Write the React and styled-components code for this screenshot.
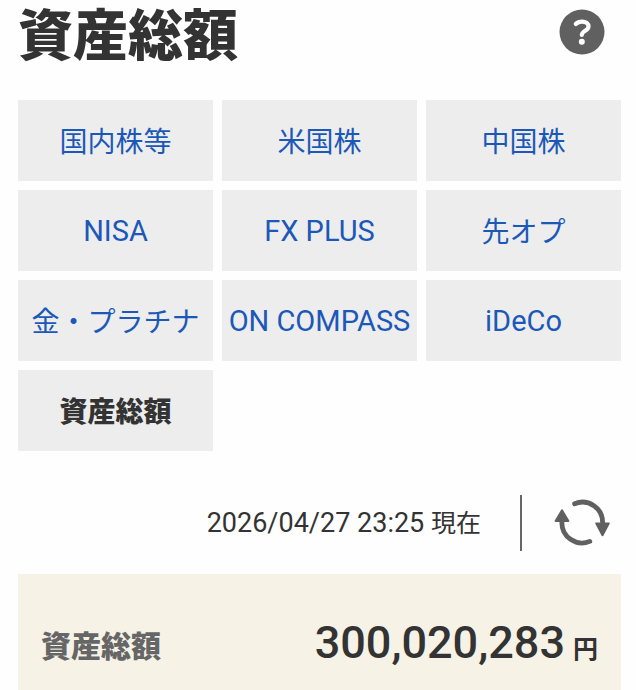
import React from 'react'
import styled, { createGlobalStyle } from 'styled-components'

const GlobalStyle = createGlobalStyle`
  * {
    box-sizing: border-box;
  }

  body {
    background: #fefefe;
    color: #333;
    font-family: Roboto, 'Noto Sans CJK JP', sans-serif;
    margin: 0;
  }
`

const Page = styled.main`
  padding: 0 15px 0 18px;
`

const Header = styled.header`
  align-items: flex-start;
  display: flex;
  justify-content: space-between;
  margin-bottom: 28px;
  padding-right: 16px;
`

const Title = styled.h1`
  font-size: 55px;
  font-weight: 900;
  line-height: 72px;
  margin: 0;
`

const IconButton = styled.button`
  background: none;
  border: 0;
  cursor: pointer;
  display: flex;
  padding: 0;
`

const HelpButton = styled(IconButton)`
  padding-top: 9px;
`

const AccountGrid = styled.nav`
  display: grid;
  grid-auto-rows: 81px;
  grid-gap: 9px;
  grid-template-columns: repeat(3, 1fr);
`

const AccountLink = styled.a`
  align-items: center;
  background: #ededed;
  color: ${({ $active }) => ($active ? '#333' : '#1b58b8')};
  display: flex;
  font-size: ${({ $latin }) => ($latin ? 29 : 28)}px;
  font-weight: ${({ $active }) => ($active ? 900 : 400)};
  justify-content: center;
  line-height: 40px;
  padding-top: ${({ $latin }) => ($latin ? 1 : 4)}px;
  text-decoration: none;
  white-space: nowrap;
`

const UpdateBar = styled.div`
  align-items: center;
  display: flex;
  height: 56px;
  justify-content: flex-end;
  margin: 44px 0 23px;
  padding-right: 11px;
`

const UpdatedAt = styled.time`
  font-size: 27px;
  line-height: 40px;
`

const Suffix = styled.span`
  font-size: 25px;
`

const Divider = styled.span`
  align-self: stretch;
  background: #666;
  margin: 0 32px 0 39px;
  width: 2px;
`

const Summary = styled.dl`
  align-items: center;
  background: #f6f2e6;
  display: flex;
  justify-content: space-between;
  margin: 0;
  padding: 39px 23px 17px;
`

const SummaryLabel = styled.dt`
  color: #666;
  font-size: 30px;
  font-weight: 900;
  line-height: 60px;
`

const SummaryValue = styled.dd`
  font-size: 45px;
  font-weight: 500;
  line-height: 60px;
  margin: 0;
`

const Unit = styled.span`
  font-size: 25px;
  font-weight: 700;
  margin-left: 8px;
`

const accounts = [
  { key: 'domestic', label: '国内株等' },
  { key: 'us', label: '米国株' },
  { key: 'china', label: '中国株' },
  { key: 'nisa', label: 'NISA', latin: true },
  { key: 'fx', label: 'FX PLUS', latin: true },
  { key: 'futures', label: '先オプ' },
  { key: 'metals', label: '金・プラチナ' },
  { key: 'compass', label: 'ON COMPASS', latin: true },
  { key: 'ideco', label: 'iDeCo', latin: true },
  { key: 'total', label: '資産総額' }
]

const HelpIcon = () => (
  <svg width="46" height="46" viewBox="0 0 46 46" aria-hidden="true">
    <circle cx="23" cy="23" r="22.5" fill="#606060" />
    <path
      d="M16.8 15C18.4 13.2 20.6 12.6 23.2 12.6C27 12.6 29.5 14.4 29.5 17.4C29.5 21.8 22.8 21.6 22.8 26"
      fill="none"
      stroke="#fff"
      strokeWidth="4.2"
      strokeLinecap="round"
      strokeLinejoin="round"
    />
    <circle cx="22.8" cy="32.8" r="3" fill="#fff" />
  </svg>
)

const RefreshIcon = () => (
  <svg width="56" height="48" viewBox="0 0 56 48" aria-hidden="true">
    <g fill="none" stroke="#606060" strokeWidth="4.8" strokeLinecap="round">
      <path d="M20.6 4.7A20.2 20.2 0 0 1 48.6 24" />
      <path d="M35.8 42.4A20.2 20.2 0 0 1 7.9 23" />
    </g>
    <g
      fill="#606060"
      stroke="#606060"
      strokeWidth="2"
      strokeLinejoin="round"
    >
      <path d="M8 11.2L14.4 22H1.6Z" />
      <path d="M48.5 36.2L42.2 24.4H54.8Z" />
    </g>
  </svg>
)

export default function App() {
  return (
    <>
      <GlobalStyle />
      <Page>
        <Header>
          <Title>資産総額</Title>
          <HelpButton type="button" aria-label="ヘルプ">
            <HelpIcon />
          </HelpButton>
        </Header>
        <AccountGrid>
          {accounts.map(({ key, label, latin }) => (
            <AccountLink
              key={key}
              href={`#${key}`}
              $active={key === 'total'}
              $latin={latin}
              aria-current={key === 'total' ? 'page' : undefined}
            >
              {label}
            </AccountLink>
          ))}
        </AccountGrid>
        <UpdateBar>
          <UpdatedAt dateTime="2026-04-27T23:25">
            2026/04/27 23:25 <Suffix>現在</Suffix>
          </UpdatedAt>
          <Divider />
          <IconButton type="button" aria-label="更新">
            <RefreshIcon />
          </IconButton>
        </UpdateBar>
        <Summary>
          <SummaryLabel>資産総額</SummaryLabel>
          <SummaryValue>
            300,020,283
            <Unit>円</Unit>
          </SummaryValue>
        </Summary>
      </Page>
    </>
  )
}
